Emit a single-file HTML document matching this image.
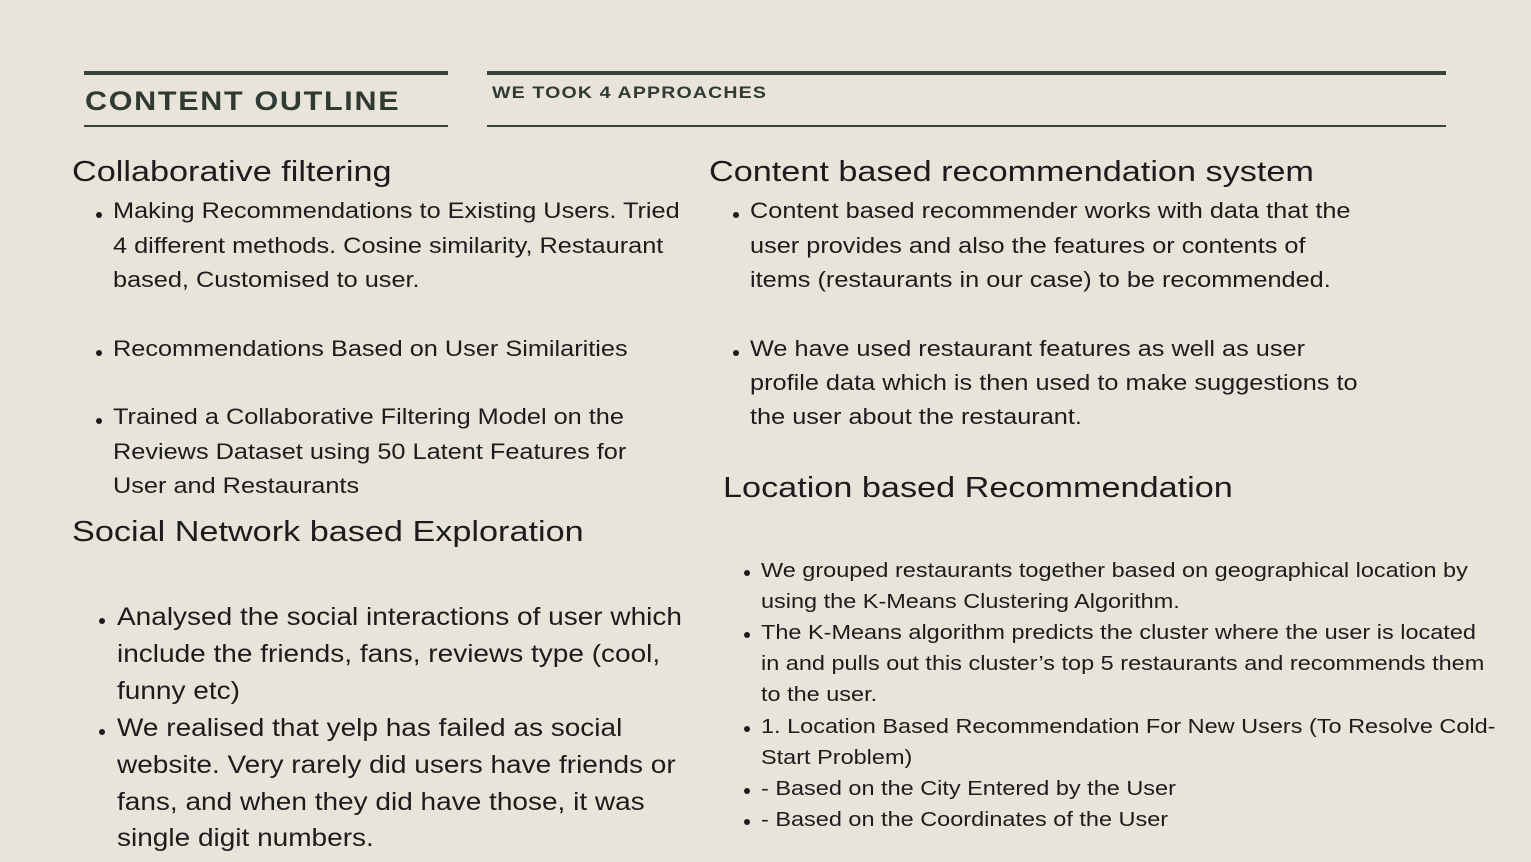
<!DOCTYPE html>
<html><head><meta charset="utf-8"><style>
html,body{margin:0;padding:0}
body{width:1531px;height:862px;background:#e8e4da;position:relative;overflow:hidden;font-family:"Liberation Sans",sans-serif;color:#1c1c1c}
.a{position:absolute;white-space:nowrap;transform-origin:0 0}
.ln{position:absolute;background:#37433b}
.h{font-size:29px;transform:scaleX(1.18)}
.b{font-size:22px;transform:scaleX(1.15)}
.s{font-size:25px;transform:scaleX(1.12)}
.l{font-size:20.5px;transform:scaleX(1.145)}
.dot{position:absolute;width:6px;height:6px;border-radius:50%;background:#1c1c1c}
</style></head><body>
<div class="ln" style="left:84px;top:71px;width:364px;height:4px"></div>
<div class="ln" style="left:84px;top:125px;width:364px;height:2px"></div>
<div class="ln" style="left:487px;top:71px;width:959px;height:4px"></div>
<div class="ln" style="left:487px;top:125px;width:959px;height:2px"></div>
<div class="a" style="left:85px;top:86px;font-size:27px;font-weight:bold;color:#2f3a33;letter-spacing:1.5px;transform:scaleX(1.13)">CONTENT OUTLINE</div>
<div class="a" style="left:492px;top:83px;font-size:17px;font-weight:bold;color:#2f3a33;letter-spacing:1px;transform:scaleX(1.15)">WE TOOK 4 APPROACHES</div>

<div class="a h" style="left:72px;top:156px">Collaborative filtering</div>
<div class="dot" style="left:96px;top:212px"></div>
<div class="a b" style="left:113px;top:198px">Making Recommendations to Existing Users. Tried</div>
<div class="a b" style="left:113px;top:233px">4 different methods. Cosine similarity, Restaurant</div>
<div class="a b" style="left:113px;top:267px">based, Customised to user.</div>
<div class="dot" style="left:96px;top:350px"></div>
<div class="a b" style="left:113px;top:336px">Recommendations Based on User Similarities</div>
<div class="dot" style="left:96px;top:418px"></div>
<div class="a b" style="left:113px;top:404px">Trained a Collaborative Filtering Model on the</div>
<div class="a b" style="left:113px;top:439px">Reviews Dataset using 50 Latent Features for</div>
<div class="a b" style="left:113px;top:473px">User and Restaurants</div>

<div class="a h" style="left:72px;top:516px">Social Network based Exploration</div>
<div class="dot" style="left:99px;top:618px"></div>
<div class="a s" style="left:117px;top:603px">Analysed the social interactions of user which</div>
<div class="a s" style="left:117px;top:640px">include the friends, fans, reviews type (cool,</div>
<div class="a s" style="left:117px;top:677px">funny etc)</div>
<div class="dot" style="left:99px;top:729px"></div>
<div class="a s" style="left:117px;top:714px">We realised that yelp has failed as social</div>
<div class="a s" style="left:117px;top:751px">website. Very rarely did users have friends or</div>
<div class="a s" style="left:117px;top:788px">fans, and when they did have those, it was</div>
<div class="a s" style="left:117px;top:824px">single digit numbers.</div>

<div class="a h" style="left:709px;top:156px">Content based recommendation system</div>
<div class="dot" style="left:733px;top:212px"></div>
<div class="a b" style="left:750px;top:198px">Content based recommender works with data that the</div>
<div class="a b" style="left:750px;top:233px">user provides and also the features or contents of</div>
<div class="a b" style="left:750px;top:267px">items (restaurants in our case) to be recommended.</div>
<div class="dot" style="left:733px;top:350px"></div>
<div class="a b" style="left:750px;top:336px">We have used restaurant features as well as user</div>
<div class="a b" style="left:750px;top:370px">profile data which is then used to make suggestions to</div>
<div class="a b" style="left:750px;top:404px">the user about the restaurant.</div>

<div class="a h" style="left:723px;top:472px">Location based Recommendation</div>
<div class="dot" style="left:744px;top:570px"></div>
<div class="a l" style="left:761px;top:559px">We grouped restaurants together based on geographical location by</div>
<div class="a l" style="left:761px;top:590px">using the K-Means Clustering Algorithm.</div>
<div class="dot" style="left:744px;top:632px"></div>
<div class="a l" style="left:761px;top:621px">The K-Means algorithm predicts the cluster where the user is located</div>
<div class="a l" style="left:761px;top:652px">in and pulls out this cluster’s top 5 restaurants and recommends them</div>
<div class="a l" style="left:761px;top:683px">to the user.</div>
<div class="dot" style="left:744px;top:726px"></div>
<div class="a l" style="left:761px;top:715px">1. Location Based Recommendation For New Users (To Resolve Cold-</div>
<div class="a l" style="left:761px;top:746px">Start Problem)</div>
<div class="dot" style="left:744px;top:788px"></div>
<div class="a l" style="left:761px;top:777px">- Based on the City Entered by the User</div>
<div class="dot" style="left:744px;top:819px"></div>
<div class="a l" style="left:761px;top:808px">- Based on the Coordinates of the User</div>
</body></html>
